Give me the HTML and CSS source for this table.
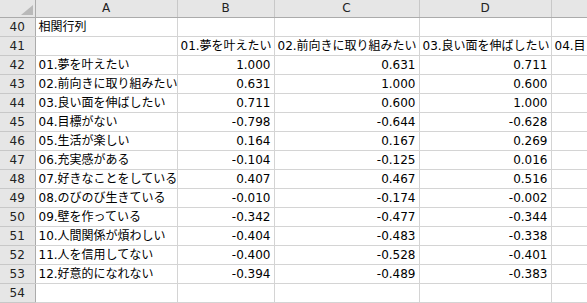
FILE: index.html
```html
<!DOCTYPE html>
<html lang="ja">
<head>
<meta charset="utf-8">
<link rel="stylesheet" href="styles.css">
</head>
<body>
<table class="sheet">
  <colgroup>
    <col class="c-rh"><col class="c-a"><col class="c-b"><col class="c-c"><col class="c-d"><col class="c-e">
  </colgroup>
  <thead>
    <tr class="hdr">
      <th class="corner"><span class="tri"></span></th>
      <th>A</th><th>B</th><th>C</th><th>D</th><th class="last"></th>
    </tr>
  </thead>
  <tbody>
    <tr><th class="rn">40</th><td>相関行列</td><td></td><td></td><td></td><td class="e"></td></tr>
    <tr><th class="rn">41</th><td></td><td>01.夢を叶えたい</td><td>02.前向きに取り組みたい</td><td>03.良い面を伸ばしたい</td><td class="e">04.目</td></tr>
    <tr><th class="rn">42</th><td>01.夢を叶えたい</td><td class="n">1.000</td><td class="n">0.631</td><td class="n">0.711</td><td class="e"></td></tr>
    <tr><th class="rn">43</th><td>02.前向きに取り組みたい</td><td class="n">0.631</td><td class="n">1.000</td><td class="n">0.600</td><td class="e"></td></tr>
    <tr><th class="rn">44</th><td>03.良い面を伸ばしたい</td><td class="n">0.711</td><td class="n">0.600</td><td class="n">1.000</td><td class="e"></td></tr>
    <tr><th class="rn">45</th><td>04.目標がない</td><td class="n">-0.798</td><td class="n">-0.644</td><td class="n">-0.628</td><td class="e"></td></tr>
    <tr><th class="rn">46</th><td>05.生活が楽しい</td><td class="n">0.164</td><td class="n">0.167</td><td class="n">0.269</td><td class="e"></td></tr>
    <tr><th class="rn">47</th><td>06.充実感がある</td><td class="n">-0.104</td><td class="n">-0.125</td><td class="n">0.016</td><td class="e"></td></tr>
    <tr><th class="rn">48</th><td>07.好きなことをしている</td><td class="n">0.407</td><td class="n">0.467</td><td class="n">0.516</td><td class="e"></td></tr>
    <tr><th class="rn">49</th><td>08.のびのび生きている</td><td class="n">-0.010</td><td class="n">-0.174</td><td class="n">-0.002</td><td class="e"></td></tr>
    <tr><th class="rn">50</th><td>09.壁を作っている</td><td class="n">-0.342</td><td class="n">-0.477</td><td class="n">-0.344</td><td class="e"></td></tr>
    <tr><th class="rn">51</th><td>10.人間関係が煩わしい</td><td class="n">-0.404</td><td class="n">-0.483</td><td class="n">-0.338</td><td class="e"></td></tr>
    <tr><th class="rn">52</th><td>11.人を信用してない</td><td class="n">-0.400</td><td class="n">-0.528</td><td class="n">-0.401</td><td class="e"></td></tr>
    <tr><th class="rn">53</th><td>12.好意的になれない</td><td class="n">-0.394</td><td class="n">-0.489</td><td class="n">-0.383</td><td class="e"></td></tr>
    <tr><th class="rn">54</th><td></td><td></td><td></td><td></td><td class="e"></td></tr>
  </tbody>
</table>
</body>
</html>
```

FILE: styles.css
```css
html, body {
  margin: 0;
  padding: 0;
  background: #ffffff;
  overflow: hidden;
}
body {
  width: 587px;
  height: 303px;
}
.sheet {
  border-collapse: collapse;
  table-layout: fixed;
  width: 588px;
  font-family: "DejaVu Sans", "Noto Sans CJK JP", sans-serif;
  font-size: 12px;
  color: #000000;
}
.c-rh { width: 35px; }
.c-a { width: 142px; }
.c-b { width: 97px; }
.c-c { width: 145px; }
.c-d { width: 132px; }
.c-e { width: 37px; }

.sheet tr { height: 19px; }
.sheet tr.hdr { height: 17px; }

.sheet th {
  background: #e6e6e6;
  font-weight: normal;
  color: #222222;
  border: 1px solid #ababab;
  border-top: none;
  padding: 0;
  text-align: center;
  line-height: 16px;
}
.hdr th {
  border-top: none;
  border-left-color: #c8c8c8;
  border-right-color: #c8c8c8;
  border-bottom: 1px solid #ababab;
}
.hdr th.corner {
  position: relative;
  border-left: none;
  border-right: 1px solid #ababab;
}
.tri {
  position: absolute;
  right: 2px;
  bottom: 2px;
  width: 0;
  height: 0;
  border-left: 12px solid transparent;
  border-bottom: 10px solid #b9b9b9;
}
.sheet th.rn {
  border-left: none;
  border-right: 1px solid #ababab;
  border-top-color: #c8c8c8;
  border-bottom-color: #c8c8c8;
  text-align: center;
  line-height: 18px;
}
.sheet td {
  border: 1px solid #d4d4d4;
  padding: 0 3px;
  white-space: nowrap;
  overflow: hidden;
  line-height: 18px;
  vertical-align: middle;
}
.sheet td.n {
  text-align: right;
}
.sheet td.e {
  border-right: none;
  padding-right: 0;
}
```
